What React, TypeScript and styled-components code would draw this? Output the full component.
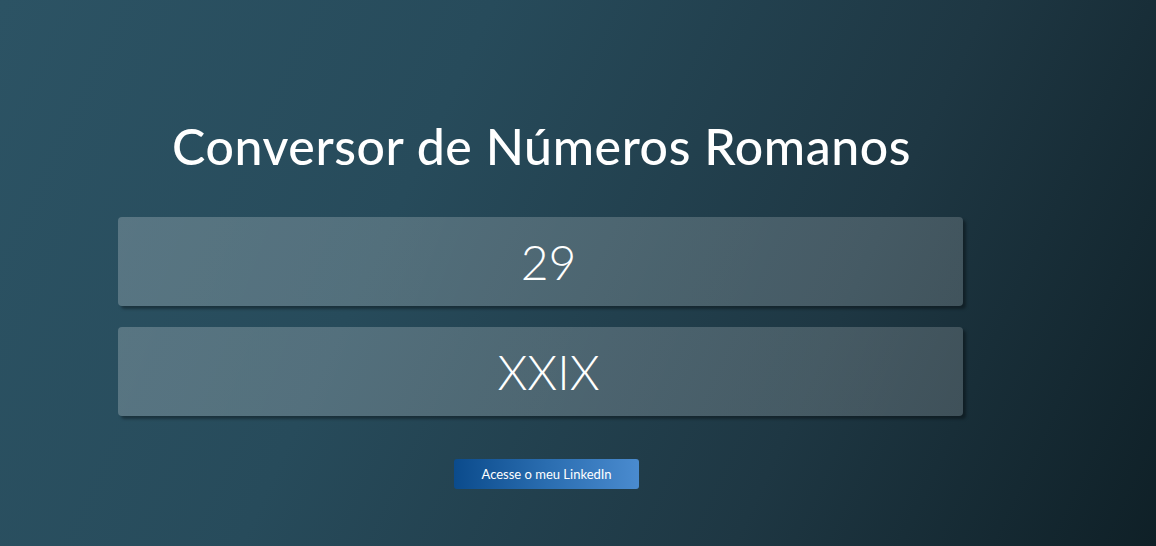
import React, { useState } from "react";
import styled, { createGlobalStyle } from "styled-components";

const GlobalStyle = createGlobalStyle`
  html, body {
    margin: 0;
    padding: 0;
    height: 100%;
  }
  body {
    font-family: "Lato", "Noto Sans", sans-serif;
    background: linear-gradient(115deg, #2c5364 0%, #274b5b 35%, #1e3743 70%, #0f2027 100%);
    min-height: 546px;
    overflow: hidden;
  }
`;

const Page = styled.main`
  width: 845px;
  padding: 114px 0 0 118px;
  display: flex;
  flex-direction: column;
`;

const Title = styled.h1`
  margin: 0 0 39px 54px;
  font-family: "Lato", "Noto Sans", sans-serif;
  font-weight: 500;
  font-size: 50px;
  line-height: 64px;
  color: #ffffff;
  letter-spacing: 0.6px;
`;

const Fields = styled.div`
  display: flex;
  flex-direction: column;
  gap: 21px;
`;

const Field = styled.input`
  box-sizing: border-box;
  width: 845px;
  height: 89px;
  border: none;
  outline: none;
  border-radius: 4px;
  background: linear-gradient(110deg, rgba(255, 255, 255, 0.22), rgba(255, 255, 255, 0.17));
  box-shadow: 3px 3px 3px rgba(0, 0, 0, 0.35);
  color: #ffffff;
  text-align: center;
  font-family: "Lato", "Noto Sans", sans-serif;
  font-weight: 300;
  font-size: 48px;
  padding: 0 0 0 16px;
`;

const Footer = styled.div`
  display: flex;
  justify-content: center;
  padding: 43px 0 0 12px;
`;

const LinkButton = styled.a`
  display: inline-flex;
  align-items: center;
  justify-content: center;
  width: 185px;
  height: 30px;
  border-radius: 3px;
  background: linear-gradient(90deg, #0b4b8c 0%, #2a6db0 50%, #4a8bcf 100%);
  color: #ffffff;
  font-family: "Lato", "Noto Sans", sans-serif;
  font-size: 13px;
  text-decoration: none;
`;

function toRoman(n: number): string {
  const map: [number, string][] = [
    [1000, "M"], [900, "CM"], [500, "D"], [400, "CD"], [100, "C"], [90, "XC"],
    [50, "L"], [40, "XL"], [10, "X"], [9, "IX"], [5, "V"], [4, "IV"], [1, "I"],
  ];
  let out = "";
  for (const [v, s] of map) {
    while (n >= v) {
      out += s;
      n -= v;
    }
  }
  return out;
}

export default function App() {
  const [value, setValue] = useState("29");
  const num = parseInt(value, 10);
  const roman = Number.isFinite(num) && num > 0 ? toRoman(num) : "";
  return (
    <>
      <GlobalStyle />
      <Page>
        <Title>Conversor de Números Romanos</Title>
        <Fields>
          <Field value={value} onChange={(e) => setValue(e.target.value)} />
          <Field value={roman} readOnly />
        </Fields>
        <Footer>
          <LinkButton href="#">Acesse o meu LinkedIn</LinkButton>
        </Footer>
      </Page>
    </>
  );
}
